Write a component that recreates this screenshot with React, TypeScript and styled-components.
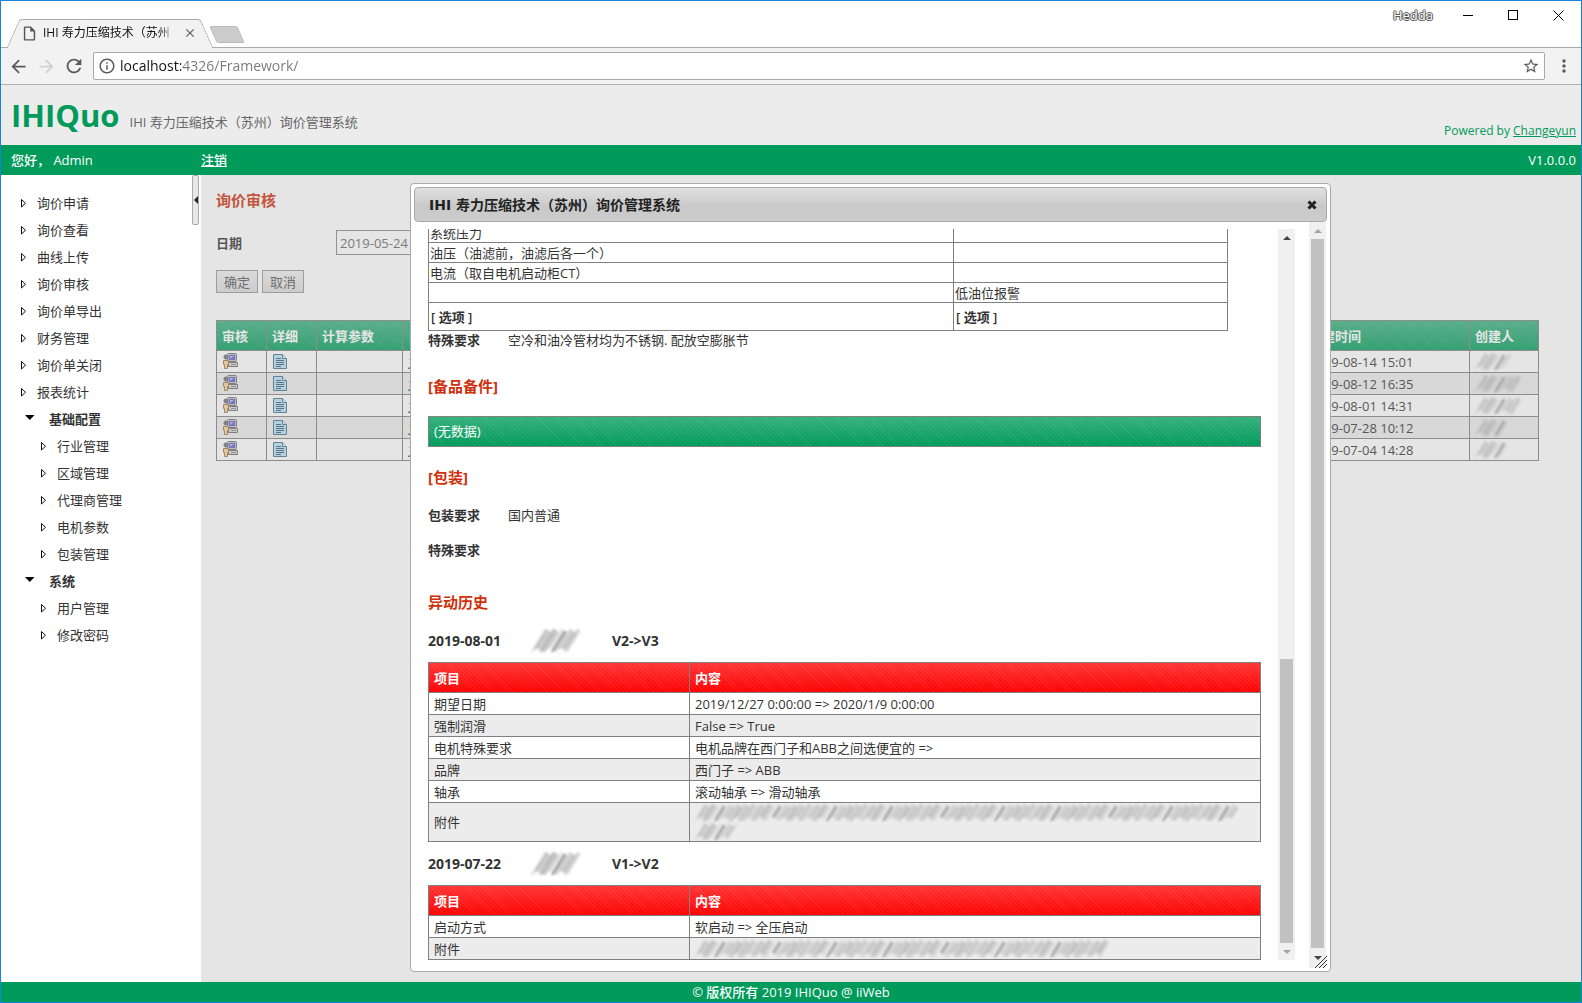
import React from 'react';
import styled, { createGlobalStyle, css } from 'styled-components';
import {
  MdArrowBack,
  MdArrowForward,
  MdClose,
  MdInfoOutline,
  MdMoreVert,
  MdOutlineInsertDriveFile,
  MdRefresh,
  MdStarBorder,
} from 'react-icons/md';

const GREEN = '#009a5a';
const RED = '#d0300c';
const LINE = '#808080';
const FONT = '"Open Sans", "Noto Sans CJK SC", sans-serif';

const GlobalStyle = createGlobalStyle`
  *, *::before, *::after { box-sizing: border-box; }
  body { margin: 0; font: 13px/20px ${FONT}; color: #333; }
  button, input { font: inherit; color: inherit; margin: 0; }
  ul { list-style: none; margin: 0; padding: 0; }
  h1, h2, h3, p { margin: 0; font-size: inherit; }
  svg { display: block; }
`;

const Window = styled.div`
  display: flex;
  flex-direction: column;
  height: 100vh;
  border: 1px solid #1883d7;
  background: #fff;
`;

/* ---------- browser frame ---------- */

const IconButton = styled.button<{ $dim?: boolean }>`
  display: flex;
  align-items: center;
  justify-content: center;
  padding: 0;
  border: 0;
  background: none;
  color: ${(p) => (p.$dim ? '#d0d0d0' : '#5a5a5a')};
`;

const TabStrip = styled.div`
  display: flex;
  align-items: flex-end;
  height: 47px;
  padding-left: 6px;
  border-bottom: 1px solid #aaa;
`;

const tabSide = css`
  content: '';
  position: absolute;
  z-index: -1;
  top: 0;
  bottom: -1px;
  background: #f2f2f2;
  border-top: 1px solid #aaa;
`;

const Tab = styled.div`
  position: relative;
  z-index: 1;
  display: flex;
  align-items: center;
  width: 206px;
  height: 28px;
  padding: 0 16px 0 14px;
  color: #222;
  &::before {
    ${tabSide}
    left: 6px;
    right: 40%;
    border-left: 1px solid #aaa;
    border-radius: 3px 0 0 0;
    transform: skewX(-24deg);
  }
  &::after {
    ${tabSide}
    right: 6px;
    left: 40%;
    border-right: 1px solid #aaa;
    border-radius: 0 3px 0 0;
    transform: skewX(24deg);
  }
`;

const TabTitle = styled.span`
  flex: 1;
  margin: 0 8px 0 5px;
  overflow: hidden;
  white-space: nowrap;
  font-size: 12px;
  color: #111;
  mask-image: linear-gradient(to right, #000 88%, transparent);
`;

const NewTab = styled.button`
  width: 28px;
  height: 17px;
  margin: 0 0 4px;
  padding: 0;
  border: 1px solid #bbb;
  border-radius: 2px;
  background: #ccc;
  transform: skewX(24deg);
`;

const WindowControls = styled.div`
  display: flex;
  align-items: center;
  align-self: flex-start;
  height: 29px;
  margin-left: auto;
  padding-right: 17px;
`;

const UserName = styled.span`
  margin-right: 30px;
  font-size: 13px;
  line-height: 29px;
  color: #fff;
  text-shadow: 1px 0 #555, -1px 0 #555, 0 1px #555, 0 -1px #555, 0 0 2px #999;
`;

const ControlButton = styled(IconButton)`
  width: 11px;
  color: #000;
  & + & { margin-left: 34px; }
`;

const Toolbar = styled.div`
  display: flex;
  align-items: center;
  gap: 6px;
  height: 37px;
  padding: 0 6px;
  background: #f2f2f2;
  border-bottom: 1px solid #b0b0b0;
`;

const ToolButton = styled(IconButton)`
  width: 22px;
  height: 28px;
`;

const AddressBar = styled.label`
  flex: 1;
  display: flex;
  align-items: center;
  gap: 4px;
  height: 28px;
  margin: 0 2px;
  padding: 0 4px;
  border: 1px solid #aaa;
  border-radius: 2px;
  background: #fff;
  color: #5a5a5a;
`;

const AddressInput = styled.input`
  flex: 1;
  min-width: 0;
  padding: 0;
  border: 0;
  outline: 0;
  font-size: 14px;
  color: transparent;
  background: linear-gradient(to right, #111 61px, #777 61px);
  background-clip: text;
`;

/* ---------- application frame ---------- */

const Banner = styled.header`
  display: flex;
  align-items: flex-end;
  justify-content: space-between;
  height: 60px;
  padding: 0 5px 4px 10px;
  background: #ececec;
`;

const Brand = styled.div`
  display: flex;
  align-items: baseline;
  gap: 10px;
`;

const BrandName = styled.h1`
  font-size: 31px;
  line-height: 52px;
  color: ${GREEN};
`;

const BrandTitle = styled.span`
  color: #666;
`;

const Powered = styled.span`
  font-size: 12px;
  color: ${GREEN};
  a { color: inherit; }
`;

const StatusBar = styled.div`
  display: flex;
  align-items: center;
  height: 30px;
  padding: 0 5px 0 10px;
  background: ${GREEN};
  color: #fff;
  font-weight: 500;
`;

const Greeting = styled.span`
  width: 190px;
  white-space: pre;
`;

const LogoutLink = styled.a`
  color: inherit;
`;

const Version = styled.span`
  margin-left: auto;
`;

const Body = styled.div`
  flex: 1;
  display: flex;
  min-height: 0;
`;

const Sidebar = styled.nav`
  width: 191px;
  padding-top: 14px;
`;

const MenuRow = styled.li<{ $level: 'top' | 'group' | 'sub' }>`
  display: flex;
  align-items: center;
  height: 27px;
  gap: ${(p) => (p.$level === 'group' ? 14 : 9)}px;
  padding-left: ${(p) => ({ top: 18, group: 23, sub: 38 })[p.$level]}px;
  font-weight: ${(p) => (p.$level === 'group' ? 700 : 400)};
  a { color: inherit; text-decoration: none; }
`;

const Collapse = styled.button`
  display: flex;
  align-items: center;
  justify-content: center;
  width: 7px;
  height: 50px;
  margin-right: 2px;
  padding: 0;
  border: 1px solid #aaa;
  border-radius: 2px;
  background: #e8e8e8;
`;

const Main = styled.main`
  position: relative;
  flex: 1;
  min-width: 0;
  padding: 10px 42px 0 15px;
`;

const PageTitle = styled.h2`
  font-size: 15px;
  font-weight: 700;
  line-height: 30px;
  color: ${RED};
`;

const Field = styled.div`
  display: flex;
  align-items: center;
  margin-top: 15px;
  label { width: 120px; font-weight: 700; }
  input {
    width: 150px;
    height: 25px;
    padding: 0 3px;
    border: 1px solid #888;
    background: #fff;
    color: #666;
  }
`;

const Actions = styled.div`
  display: flex;
  gap: 4px;
  margin: 15px 0 27px;
`;

const Button = styled.button`
  height: 23px;
  width: 42px;
  padding: 0;
  border: 1px solid #999;
  background: linear-gradient(#f0f0f0, #dcdcdc);
  color: #555;
  line-height: 20px;
`;

const stripes = (top: string, bottom: string) => css`
  background:
    repeating-linear-gradient(45deg, rgba(255, 255, 255, 0.07) 0 1px, transparent 1px 3px),
    linear-gradient(${top}, ${bottom});
`;

const Grid = styled.table<{ $tone: 'green' | 'red' }>`
  width: 100%;
  table-layout: fixed;
  border-collapse: collapse;
  th, td {
    height: 22px;
    padding: 0 5px;
    border: 1px solid ${LINE};
    line-height: 20px;
    text-align: left;
    white-space: nowrap;
  }
  thead tr {
    ${(p) => (p.$tone === 'green' ? stripes('#36b07c', GREEN) : stripes('#ff3535', '#ff0000'))}
  }
  th { height: 30px; color: #fff; }
  tbody tr:nth-child(even) { background: #ececec; }
  tbody tr:nth-child(odd) { background: #fff; }
  a { color: ${GREEN}; }
`;

const Cell = styled.td<{ $tall?: boolean }>`
  && { ${(p) => p.$tall && 'height: 39px;'} }
`;

const Footer = styled.footer`
  height: 20px;
  background: ${GREEN};
  color: #fff;
  font-weight: 500;
  text-align: center;
`;

/* ---------- dialog ---------- */

const Backdrop = styled.div`
  position: absolute;
  inset: 0;
  background: rgba(170, 170, 170, 0.3);
`;

const Dialog = styled.section`
  position: absolute;
  top: 8px;
  right: 250px;
  bottom: 10px;
  left: 209px;
  display: flex;
  flex-direction: column;
  padding: 3px;
  border: 1px solid #aaa;
  border-radius: 4px;
  background: #fff;
`;

const DialogBar = styled.div`
  display: flex;
  align-items: center;
  justify-content: space-between;
  height: 35px;
  padding: 0 9px 0 14px;
  border: 1px solid #aaa;
  border-radius: 4px;
  background: linear-gradient(#e0e0e0, #c9c9c9 55%, #cccccc);
`;

const DialogTitle = styled.h2`
  font: bold 14px/20px "DejaVu Sans", "Noto Sans CJK SC", sans-serif;
  color: #222;
`;

const DialogBody = styled.div`
  flex: 1;
  display: flex;
  min-height: 0;
`;

const InnerFrame = styled.div`
  flex: 1;
  display: flex;
  gap: 17px;
  min-width: 0;
  margin-right: 14px;
  padding: 7px 0 8px 14px;
`;

const Scroller = styled.div`
  flex: 1;
  min-width: 0;
  display: flex;
  flex-direction: column;
  justify-content: flex-end;
  overflow: hidden;
  & > * { flex-shrink: 0; }
`;

const Track = styled.div<{ $thumb: 'low' | 'full' }>`
  display: grid;
  grid-template-rows: ${(p) => (p.$thumb === 'low' ? '17px 413fr 284fr 17px' : '17px 0 1fr 20px')};
  justify-items: center;
  align-items: center;
  width: 17px;
  margin-right: ${(p) => (p.$thumb === 'low' ? 0 : 1)}px;
  background: #f0f0f0;
`;

const Thumb = styled.div`
  grid-row: 3;
  width: 13px;
  height: 100%;
  background: #c1c1c1;
`;

const Arrow = styled.span<{ $dir: 'up' | 'down'; $dim: boolean }>`
  grid-row: ${(p) => (p.$dir === 'up' ? 1 : 4)};
  border: 4px solid transparent;
  border-top-width: ${(p) => (p.$dir === 'up' ? 0 : 4)}px;
  border-bottom-width: ${(p) => (p.$dir === 'up' ? 4 : 0)}px;
  border-${(p) => (p.$dir === 'up' ? 'bottom' : 'top')}-color: ${(p) => (p.$dim ? '#a3a3a3' : '#444')};
`;

const ResizeGrip = styled.svg`
  position: absolute;
  right: 3px;
  bottom: 3px;
`;

const OptionTable = styled.table`
  width: 800px;
  table-layout: fixed;
  border-collapse: collapse;
  td {
    height: 20px;
    padding: 0 1px;
    border: 1px solid ${LINE};
    line-height: 18px;
  }
`;

const OptionCell = styled.td`
  && { height: 28px; padding: 0 2px; font-weight: 600; }
`;

const DetailRow = styled.div<{ $compact?: boolean }>`
  display: flex;
  align-items: ${(p) => (p.$compact ? 'center' : 'flex-start')};
  height: ${(p) => (p.$compact ? 18 : 35)}px;
  padding-top: ${(p) => (p.$compact ? 0 : 6)}px;
  span:first-child { width: 80px; font-weight: 700; }
`;

const SectionTitle = styled.h3<{ $above: number; $below: number }>`
  margin: ${(p) => p.$above}px 0 ${(p) => p.$below}px;
  font-size: 15px;
  font-weight: 700;
  line-height: 32px;
  color: ${RED};
`;

const EmptyBar = styled.div`
  height: 31px;
  padding: 0 5px;
  border: 1px solid ${LINE};
  ${stripes('#36b07c', GREEN)}
  color: #fff;
  line-height: 29px;
`;

const HistoryHead = styled.div`
  display: grid;
  grid-template-columns: 104px 80px 1fr;
  align-items: center;
  height: 43px;
  font-size: 14px;
  font-weight: 700;
`;

/* ---------- drawings ---------- */

const Triangle = ({ open }: { open?: boolean }) =>
  open ? (
    <svg width="11" height="10" viewBox="0 0 11 10" aria-hidden="true">
      <path d="M1 1h9.500L5.750 6z" fill="#000" />
    </svg>
  ) : (
    <svg width="9" height="10" viewBox="0 0 9 10" aria-hidden="true">
      <path d="M2.500 1.500v7.500l4-3.750z" fill="#fff" stroke="#111" />
    </svg>
  );

const ReviewIcon = () => (
  <svg width="17" height="17" viewBox="0 0 17 17" aria-hidden="true">
    <rect x="5.500" y="0.500" width="9" height="8" rx="1" fill="#c8c8c8" stroke="#6c6c6c" />
    <rect x="7" y="2" width="6" height="5" fill="#5c5cc8" />
    <path d="M8 3h4L8 6z" fill="#b4b4ff" />
    <path d="M6.500 10.500l1-1h8v4h-9z" fill="#d8d8d8" stroke="#6c6c6c" />
    <path d="M9 11.500h5" stroke="#888" />
    <circle cx="4" cy="4" r="2.500" fill="#707070" />
    <path d="M1.500 7.500h5v4h-1v4h-3v-4h-1z" fill="#ffd49a" stroke="#9a7a50" />
  </svg>
);

const PageIcon = () => (
  <svg width="16" height="16" viewBox="0 0 16 16" aria-hidden="true">
    <path d="M1.500 0.500h9l4 4v10h-13z" fill="#b8e4fa" stroke="#4a7085" />
    <path d="M10.500 0.500v4h4" fill="#eaf8ff" stroke="#4a7085" />
    <path d="M4 4.500h5M4 6.500h8M4 8.500h8M4 10.500h8M4 12.500h5" stroke="#3c5c6c" />
  </svg>
);

const IconCell = styled.span`
  display: flex;
  align-items: center;
  height: 20px;
`;

const CrossIcon = () => (
  <svg width="10" height="10" viewBox="0 0 10 10" aria-hidden="true">
    <path d="M1.500 1.500l7 7M8.500 1.500l-7 7" stroke="#222" strokeWidth="3" />
  </svg>
);

/* Name or file name hidden behind slanted pencil strokes. */
const SmudgeDrawing = styled.svg`
  filter: blur(1px);
  overflow: visible;
`;

const Smudge = ({ width, height = 19, heavy }: { width: number; height?: number; heavy?: boolean }) => {
  const slant = heavy ? 14 : 10;
  const strokes = [];
  for (let x = 0, i = 0; x < width - slant; x += 2, i += 1) {
    const beat = i % 28;
    const gap = beat === 8 || beat === 9 || beat === 12 || beat === 26;
    const single = beat === 10;
    const shade = gap ? 0.04 : single ? 0.8 : 0.1 + ((i * i * 3 + i) % 7) * 0.06;
    const foot = (i * i * 2 + i) % 6;
    const head = (i * 5) % 4;
    strokes.push(
      <path
        key={x}
        d={`M${x + foot / 2} ${height - 1 - foot}L${x + slant - head / 2} ${1 + head}`}
        strokeOpacity={heavy ? shade + 0.12 : shade}
        strokeWidth={single ? 2 : 3}
      />,
    );
  }
  return (
    <SmudgeDrawing width={width} height={height} stroke="#8c8c8c" aria-hidden="true">
      {strokes}
    </SmudgeDrawing>
  );
};

/* ---------- data ---------- */

const MENU: { label: string; level: 'top' | 'group' | 'sub' }[] = [
  ...['询价申请', '询价查看', '曲线上传', '询价审核', '询价单导出', '财务管理', '询价单关闭', '报表统计'].map(
    (label) => ({ label, level: 'top' as const }),
  ),
  { label: '基础配置', level: 'group' },
  ...['行业管理', '区域管理', '代理商管理', '电机参数', '包装管理'].map((label) => ({ label, level: 'sub' as const })),
  { label: '系统', level: 'group' },
  ...['用户管理', '修改密码'].map((label) => ({ label, level: 'sub' as const })),
];

const INQUIRIES = [
  { time: '2019-08-14 15:01', name: 38 },
  { time: '2019-08-12 16:35', name: 48 },
  { time: '2019-08-01 14:31', name: 48 },
  { time: '2019-07-28 10:12', name: 36 },
  { time: '2019-07-04 14:28', name: 36 },
];

const HISTORY = [
  {
    date: '2019-08-01',
    version: 'V2->V3',
    changes: [
      ['期望日期', '2019/12/27 0:00:00 => 2020/1/9 0:00:00'],
      ['强制润滑', 'False => True'],
      ['电机特殊要求', '电机品牌在西门子和ABB之间选便宜的 =>'],
      ['品牌', '西门子 => ABB'],
      ['轴承', '滚动轴承 => 滑动轴承'],
    ],
    files: [545, 44],
  },
  {
    date: '2019-07-22',
    version: 'V1->V2',
    changes: [['启动方式', '软启动 => 全压启动']],
    files: [415],
  },
];

const ScrollTrack = ({ thumb }: { thumb: 'low' | 'full' }) => (
  <Track $thumb={thumb} aria-hidden="true">
    <Arrow $dir="up" $dim={thumb === 'full'} />
    <Thumb />
    <Arrow $dir="down" $dim={thumb === 'low'} />
  </Track>
);

const InquiryDialog = () => (
  <Dialog role="dialog" aria-labelledby="dialog-title">
    <DialogBar>
      <DialogTitle id="dialog-title">IHI 寿力压缩技术（苏州）询价管理系统</DialogTitle>
      <IconButton aria-label="关闭">
        <CrossIcon />
      </IconButton>
    </DialogBar>
    <DialogBody>
      <InnerFrame>
        <Scroller>
          <OptionTable>
            <colgroup>
              <col width="525" />
              <col />
            </colgroup>
            <tbody>
              <tr><td>系统压力</td><td /></tr>
              <tr><td>油压（油滤前，油滤后各一个）</td><td /></tr>
              <tr><td>电流（取自电机启动柜CT）</td><td /></tr>
              <tr><td /><td>低油位报警</td></tr>
              <tr><OptionCell>[ 选项 ]</OptionCell><OptionCell>[ 选项 ]</OptionCell></tr>
            </tbody>
          </OptionTable>
          <DetailRow $compact>
            <span>特殊要求</span>
            <span>空冷和油冷管材均为不锈钢. 配放空膨胀节</span>
          </DetailRow>
          <SectionTitle $above={21} $below={14}>[备品备件]</SectionTitle>
          <EmptyBar>(无数据)</EmptyBar>
          <SectionTitle $above={14} $below={6}>[包装]</SectionTitle>
          <DetailRow>
            <span>包装要求</span>
            <span>国内普通</span>
          </DetailRow>
          <DetailRow>
            <span>特殊要求</span>
          </DetailRow>
          <SectionTitle $above={17} $below={1}>异动历史</SectionTitle>
          {HISTORY.map((entry) => (
            <React.Fragment key={entry.date}>
              <HistoryHead>
                <span>{entry.date}</span>
                <Smudge width={50} height={25} heavy />
                <span>{entry.version}</span>
              </HistoryHead>
              <Grid $tone="red">
                <colgroup>
                  <col width="261" />
                  <col />
                </colgroup>
                <thead>
                  <tr><th>项目</th><th>内容</th></tr>
                </thead>
                <tbody>
                  {entry.changes.map(([item, text]) => (
                    <tr key={item}><td>{item}</td><td>{text}</td></tr>
                  ))}
                  <tr>
                    <Cell $tall={entry.files.length > 1}>附件</Cell>
                    <td>
                      {entry.files.map((w) => (
                        <Smudge key={w} width={w} />
                      ))}
                    </td>
                  </tr>
                </tbody>
              </Grid>
            </React.Fragment>
          ))}
        </Scroller>
        <ScrollTrack thumb="low" />
      </InnerFrame>
      <ScrollTrack thumb="full" />
    </DialogBody>
    <ResizeGrip width="12" height="12" viewBox="0 0 12 12" aria-hidden="true">
      <path d="M0 12L12 0M4 12l8-8M8 12l4-4" stroke="#333" />
    </ResizeGrip>
  </Dialog>
);

export default function App() {
  return (
    <Window>
      <GlobalStyle />
      <TabStrip>
        <Tab>
          <MdOutlineInsertDriveFile size={17} color="#555" />
          <TabTitle>IHI 寿力压缩技术（苏州</TabTitle>
          <IconButton aria-label="关闭标签页">
            <MdClose size={14} />
          </IconButton>
        </Tab>
        <NewTab aria-label="新标签页" />
        <WindowControls>
          <UserName>Hedda</UserName>
          <ControlButton aria-label="最小化">
            <svg width="11" height="11"><path d="M0 5.500h10" stroke="#000" /></svg>
          </ControlButton>
          <ControlButton aria-label="最大化">
            <svg width="11" height="11"><rect x="0.500" y="0.500" width="9" height="9" fill="none" stroke="#000" /></svg>
          </ControlButton>
          <ControlButton aria-label="关闭窗口">
            <svg width="11" height="11"><path d="M0.500 0.500l10 10M10.500 0.500l-10 10" stroke="#000" /></svg>
          </ControlButton>
        </WindowControls>
      </TabStrip>
      <Toolbar>
        <ToolButton aria-label="后退"><MdArrowBack size={21} /></ToolButton>
        <ToolButton aria-label="前进" $dim><MdArrowForward size={21} /></ToolButton>
        <ToolButton aria-label="刷新"><MdRefresh size={22} /></ToolButton>
        <AddressBar>
          <MdInfoOutline size={18} />
          <AddressInput aria-label="地址" defaultValue="localhost:4326/Framework/" />
          <MdStarBorder size={18} />
        </AddressBar>
        <ToolButton aria-label="菜单"><MdMoreVert size={20} /></ToolButton>
      </Toolbar>

      <Banner>
        <Brand>
          <BrandName>IHIQuo</BrandName>
          <BrandTitle>IHI 寿力压缩技术（苏州）询价管理系统</BrandTitle>
        </Brand>
        <Powered>
          Powered by <a href="#changeyun">Changeyun</a>
        </Powered>
      </Banner>
      <StatusBar>
        <Greeting>您好， Admin</Greeting>
        <LogoutLink href="#logout">注销</LogoutLink>
        <Version>V1.0.0.0</Version>
      </StatusBar>

      <Body>
        <Sidebar>
          <ul>
            {MENU.map(({ label, level }) => (
              <MenuRow key={label} $level={level}>
                <Triangle open={level === 'group'} />
                <a href={`#${label}`}>{label}</a>
              </MenuRow>
            ))}
          </ul>
        </Sidebar>
        <Collapse aria-label="收起菜单">
          <svg width="4" height="8" viewBox="0 0 4 8"><path d="M4 0v8L0 4z" fill="#222" /></svg>
        </Collapse>
        <Main>
          <PageTitle>询价审核</PageTitle>
          <Field>
            <label htmlFor="date">日期</label>
            <input id="date" defaultValue="2019-05-24" />
          </Field>
          <Actions>
            <Button>确定</Button>
            <Button>取消</Button>
          </Actions>
          <Grid $tone="green">
            <colgroup>
              <col width="50" />
              <col width="50" />
              <col width="86" />
              <col />
              <col width="166" />
              <col width="69" />
            </colgroup>
            <thead>
              <tr>
                <th>审核</th>
                <th>详细</th>
                <th>计算参数</th>
                <th>日</th>
                <th>创建时间</th>
                <th>创建人</th>
              </tr>
            </thead>
            <tbody>
              {INQUIRIES.map((row) => (
                <tr key={row.time}>
                  <td><IconCell><ReviewIcon /></IconCell></td>
                  <td><IconCell><PageIcon /></IconCell></td>
                  <td />
                  <td><a href="#item">主</a></td>
                  <td>{row.time}</td>
                  <td><Smudge width={row.name} /></td>
                </tr>
              ))}
            </tbody>
          </Grid>
          <Backdrop />
          <InquiryDialog />
        </Main>
      </Body>
      <Footer>© 版权所有 2019 IHIQuo @ iiWeb</Footer>
    </Window>
  );
}
